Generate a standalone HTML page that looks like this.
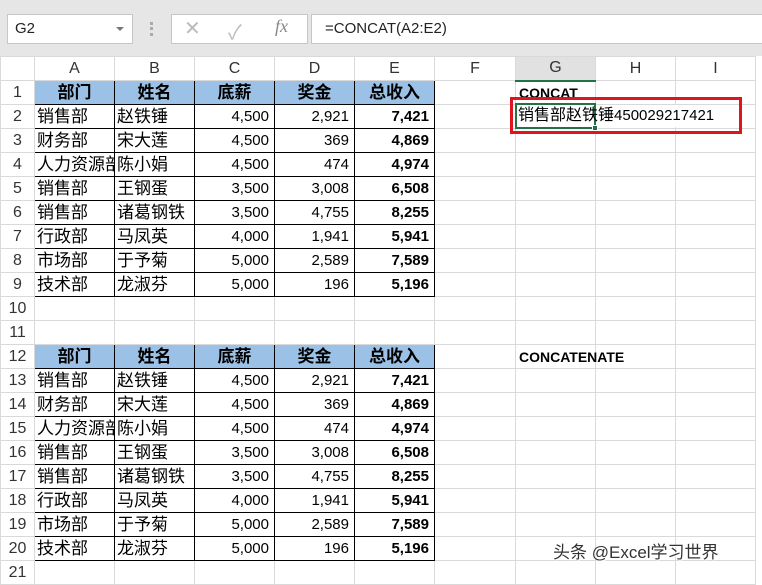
<!DOCTYPE html>
<html><head><meta charset="utf-8"><style>
*{margin:0;padding:0;box-sizing:border-box}
body{width:762px;height:577px;overflow:hidden;background:#fff;font-family:"Liberation Sans","Noto Sans CJK SC",sans-serif;position:relative}
.top{position:absolute;left:0;top:0;width:762px;height:56px;background:#e6e6e6}
.nb{position:absolute;left:7px;top:14px;width:126px;height:30px;background:#fff;border:1px solid #c6c6c6;font-size:15px;line-height:28px;padding-left:7px;color:#222}
.nb:after{content:"";position:absolute;right:8px;top:12px;border:4px solid transparent;border-top:4px solid #777}
.dots{position:absolute;left:150px;top:22px;width:3px;height:14px;border-left:3px dotted #aaa}
.fx{position:absolute;left:171px;top:14px;width:137px;height:30px;background:#fff;border:1px solid #c6c6c6;color:#bbb;font-size:20px}
.fb{position:absolute;left:311px;top:14px;width:460px;height:30px;background:#fff;border:1px solid #c6c6c6;font-size:15px;line-height:28px;padding-left:13px;color:#222}
table{position:absolute;left:0;top:56px;border-collapse:collapse;table-layout:fixed;width:755px}
td{height:24px;line-height:22px;border:1px solid #d9d9d9;font-size:17px;white-space:nowrap;overflow:hidden;padding:0 3px;color:#000}
tr.h td{background:#fff;text-align:center;font-size:16px;color:#333;border-color:#d9d9d9}
td.rn{text-align:center;font-size:16px;color:#333;background:#fff;padding:0}
td.hd{background:#9bc2e6;font-weight:bold;text-align:center;border:1px solid #000}
td.d{border:1px solid #000;padding:0 2px}
td.n{text-align:right;font-size:15px;border:1px solid #000;padding-right:5px}
td.b{font-weight:bold}
td.lbl{font-size:14px;font-weight:bold;overflow:visible}
</style></head><body>
<div class="top"></div>
<div class="nb">G2</div>
<div class="dots"></div>
<div class="fx"><span style="position:absolute;left:12px;top:1px">✕</span><span style="position:absolute;left:56px;top:1px">✓</span><span style="position:absolute;left:103px;top:1px;font-family:'Liberation Serif',serif;font-style:italic;color:#888;font-size:18px">fx</span></div>
<div class="fb">=CONCAT(A2:E2)</div>
<table>
<colgroup><col style="width:34px"><col style="width:80px"><col style="width:80px"><col style="width:80px"><col style="width:80px"><col style="width:80px"><col style="width:81px"><col style="width:80px"><col style="width:80px"><col style="width:80px"></colgroup>
<tr class="h"><td></td><td>A</td><td>B</td><td>C</td><td>D</td><td>E</td><td>F</td><td style="background:#e1e1e1;border-bottom:2px solid #217346">G</td><td>H</td><td>I</td></tr>
<tr><td class="rn">1</td><td class="hd">部门</td><td class="hd">姓名</td><td class="hd">底薪</td><td class="hd">奖金</td><td class="hd">总收入</td><td></td><td class="lbl">CONCAT</td><td></td><td></td></tr>
<tr><td class="rn">2</td><td class="d">销售部</td><td class="d">赵铁锤</td><td class="n">4,500</td><td class="n">2,921</td><td class="n b">7,421</td><td></td><td></td><td></td><td></td></tr>
<tr><td class="rn">3</td><td class="d">财务部</td><td class="d">宋大莲</td><td class="n">4,500</td><td class="n">369</td><td class="n b">4,869</td><td></td><td></td><td></td><td></td></tr>
<tr><td class="rn">4</td><td class="d">人力资源部</td><td class="d">陈小娟</td><td class="n">4,500</td><td class="n">474</td><td class="n b">4,974</td><td></td><td></td><td></td><td></td></tr>
<tr><td class="rn">5</td><td class="d">销售部</td><td class="d">王钢蛋</td><td class="n">3,500</td><td class="n">3,008</td><td class="n b">6,508</td><td></td><td></td><td></td><td></td></tr>
<tr><td class="rn">6</td><td class="d">销售部</td><td class="d">诸葛钢铁</td><td class="n">3,500</td><td class="n">4,755</td><td class="n b">8,255</td><td></td><td></td><td></td><td></td></tr>
<tr><td class="rn">7</td><td class="d">行政部</td><td class="d">马凤英</td><td class="n">4,000</td><td class="n">1,941</td><td class="n b">5,941</td><td></td><td></td><td></td><td></td></tr>
<tr><td class="rn">8</td><td class="d">市场部</td><td class="d">于予菊</td><td class="n">5,000</td><td class="n">2,589</td><td class="n b">7,589</td><td></td><td></td><td></td><td></td></tr>
<tr><td class="rn">9</td><td class="d">技术部</td><td class="d">龙淑芬</td><td class="n">5,000</td><td class="n">196</td><td class="n b">5,196</td><td></td><td></td><td></td><td></td></tr>
<tr><td class="rn">10</td><td></td><td></td><td></td><td></td><td></td><td></td><td></td><td></td><td></td></tr>
<tr><td class="rn">11</td><td></td><td></td><td></td><td></td><td></td><td></td><td></td><td></td><td></td></tr>
<tr><td class="rn">12</td><td class="hd">部门</td><td class="hd">姓名</td><td class="hd">底薪</td><td class="hd">奖金</td><td class="hd">总收入</td><td></td><td class="lbl">CONCATENATE</td><td></td><td></td></tr>
<tr><td class="rn">13</td><td class="d">销售部</td><td class="d">赵铁锤</td><td class="n">4,500</td><td class="n">2,921</td><td class="n b">7,421</td><td></td><td></td><td></td><td></td></tr>
<tr><td class="rn">14</td><td class="d">财务部</td><td class="d">宋大莲</td><td class="n">4,500</td><td class="n">369</td><td class="n b">4,869</td><td></td><td></td><td></td><td></td></tr>
<tr><td class="rn">15</td><td class="d">人力资源部</td><td class="d">陈小娟</td><td class="n">4,500</td><td class="n">474</td><td class="n b">4,974</td><td></td><td></td><td></td><td></td></tr>
<tr><td class="rn">16</td><td class="d">销售部</td><td class="d">王钢蛋</td><td class="n">3,500</td><td class="n">3,008</td><td class="n b">6,508</td><td></td><td></td><td></td><td></td></tr>
<tr><td class="rn">17</td><td class="d">销售部</td><td class="d">诸葛钢铁</td><td class="n">3,500</td><td class="n">4,755</td><td class="n b">8,255</td><td></td><td></td><td></td><td></td></tr>
<tr><td class="rn">18</td><td class="d">行政部</td><td class="d">马凤英</td><td class="n">4,000</td><td class="n">1,941</td><td class="n b">5,941</td><td></td><td></td><td></td><td></td></tr>
<tr><td class="rn">19</td><td class="d">市场部</td><td class="d">于予菊</td><td class="n">5,000</td><td class="n">2,589</td><td class="n b">7,589</td><td></td><td></td><td></td><td></td></tr>
<tr><td class="rn">20</td><td class="d">技术部</td><td class="d">龙淑芬</td><td class="n">5,000</td><td class="n">196</td><td class="n b">5,196</td><td></td><td></td><td></td><td></td></tr>
<tr><td class="rn">21</td><td></td><td></td><td></td><td></td><td></td><td></td><td></td><td></td><td></td></tr>
</table>
<div style="position:absolute;left:597px;top:105px;width:140px;height:22px;background:#fff"></div>
<div style="position:absolute;left:515px;top:103px;width:81px;height:26px;border:2px solid #217346"></div>
<div style="position:absolute;left:592px;top:125px;width:6px;height:6px;background:#217346;border:1px solid #fff"></div>
<div style="position:absolute;left:518px;top:104px;font-size:16px;line-height:24px;white-space:nowrap">销售部赵铁锤<span style="font-size:15px">450029217421</span></div>
<div style="position:absolute;left:510px;top:97px;width:232px;height:37px;border:3px solid #e0141e"></div>
<div style="position:absolute;left:553px;top:538px;font-size:17px;color:#333;text-shadow:1px 1px 0 #fff">头条 @Excel学习世界</div>
</body></html>
